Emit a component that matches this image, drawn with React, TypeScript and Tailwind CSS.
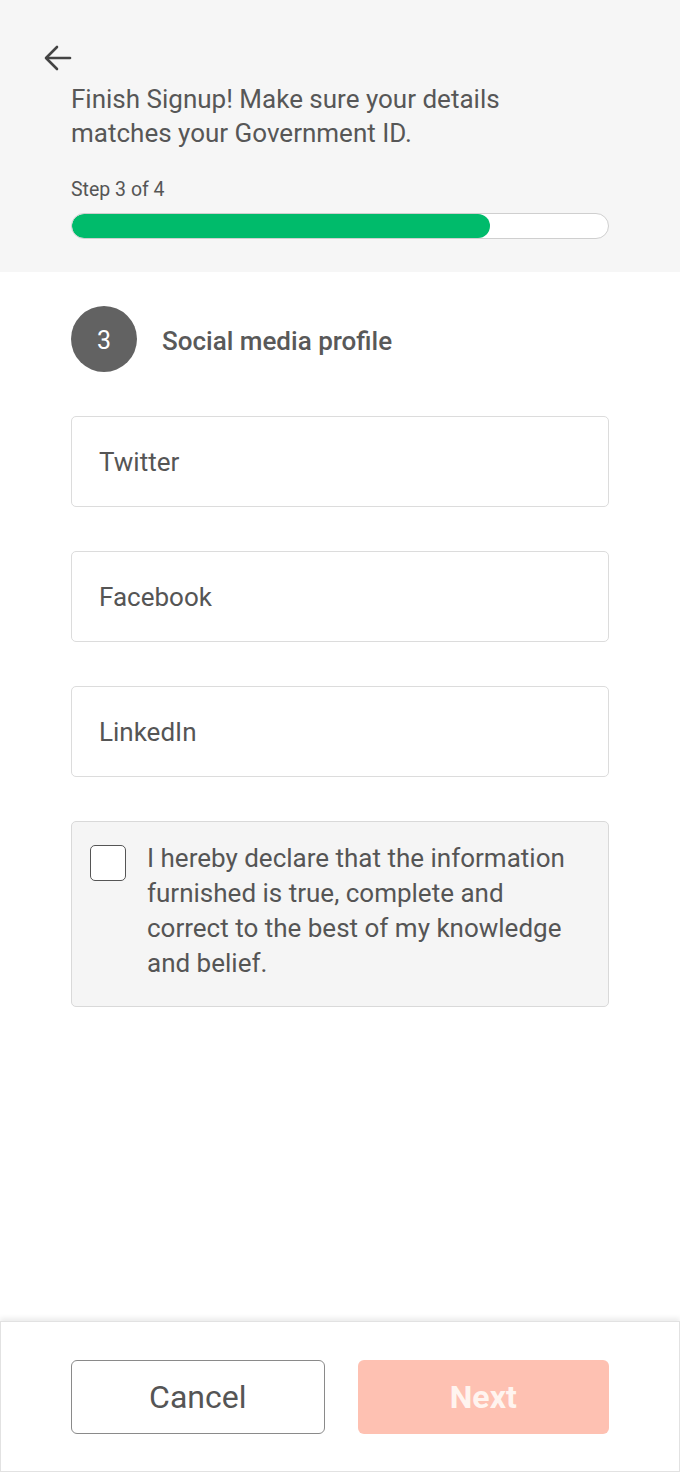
import React from "react";

const font = { fontFamily: "Roboto, 'Noto Sans', sans-serif" };

export default function App() {
  return (
    <div
      className="min-h-[1472px] w-full flex flex-col bg-white text-[#555555]"
      style={font}
    >
      <header className="bg-[#f6f6f6] px-[71px] pt-[45px] pb-[33px]">
        <button className="-ml-[27px] block h-[26px] w-[28px] text-[#444]" aria-label="Back">
          <svg viewBox="0 0 28 26" className="h-[26px] w-[28px]" fill="none" stroke="currentColor" strokeWidth="2.6" strokeLinecap="round" strokeLinejoin="round">
            <path d="M26 13H3" />
            <path d="M13 2L2 13l11 11" />
          </svg>
        </button>
        <h1 className="mt-[11px] text-[26px] leading-[34px] font-normal text-[#575757]">
          Finish Signup! Make sure your details
          <br />
          matches your Government ID.
        </h1>
        <p className="mt-[28px] text-[19.5px] leading-[24px] text-[#555]">Step 3 of 4</p>
        <div className="mt-[11px] h-[26px] w-full rounded-full border border-[#cfcfcf] bg-white overflow-hidden">
          <div className="h-full w-[78%] rounded-full bg-[#00bb6b]" />
        </div>
      </header>

      <main className="flex-1 px-[71px] pt-[34px]">
        <div className="flex items-center gap-[25px]">
          <div className="flex h-[66px] w-[66px] items-center justify-center rounded-full bg-[#626262] pt-[3px] text-[25px] text-white">
            3
          </div>
          <h2 className="mt-[4px] text-[26px] font-medium text-[#595959]">Social media profile</h2>
        </div>

        <div className="mt-[44px] flex flex-col gap-[44px]">
          {["Twitter", "Facebook", "LinkedIn"].map((p) => (
            <div
              key={p}
              className="flex h-[91px] items-center rounded-[5px] border border-[#dcdcdc] bg-white px-[27px] pt-[2px] text-[26px] text-[#555]"
            >
              {p}
            </div>
          ))}
        </div>

        <div className="mt-[44px] flex gap-[21px] rounded-[5px] border border-[#d9d9d9] bg-[#f5f5f5] pl-[18px] pr-[20px] pt-[19px] pb-[25px]">
          <div className="mt-[4px] h-[36px] w-[36px] shrink-0 rounded-[5px] border-[1.5px] border-[#555] bg-white" />
          <p className="w-[430px] text-[26px] leading-[35px] text-[#555]">
            I hereby declare that the information furnished is true, complete and correct to the best of my knowledge and belief.
          </p>
        </div>
      </main>

      <footer className="h-[151px] border border-[#e2e2e2] bg-white shadow-[0_-3px_5px_rgba(0,0,0,0.08)] px-[70px] pt-[38px]">
        <div className="flex gap-[33px]">
          <button className="flex h-[74px] flex-1 items-center justify-center rounded-[6px] border border-[#8a8a8a] bg-white text-[32px] text-[#555]">
            Cancel
          </button>
          <button className="flex h-[74px] flex-1 items-center justify-center rounded-[6px] bg-[#fec1b2] text-[32px] font-bold text-[#fff4ef]">
            Next
          </button>
        </div>
      </footer>
    </div>
  );
}
